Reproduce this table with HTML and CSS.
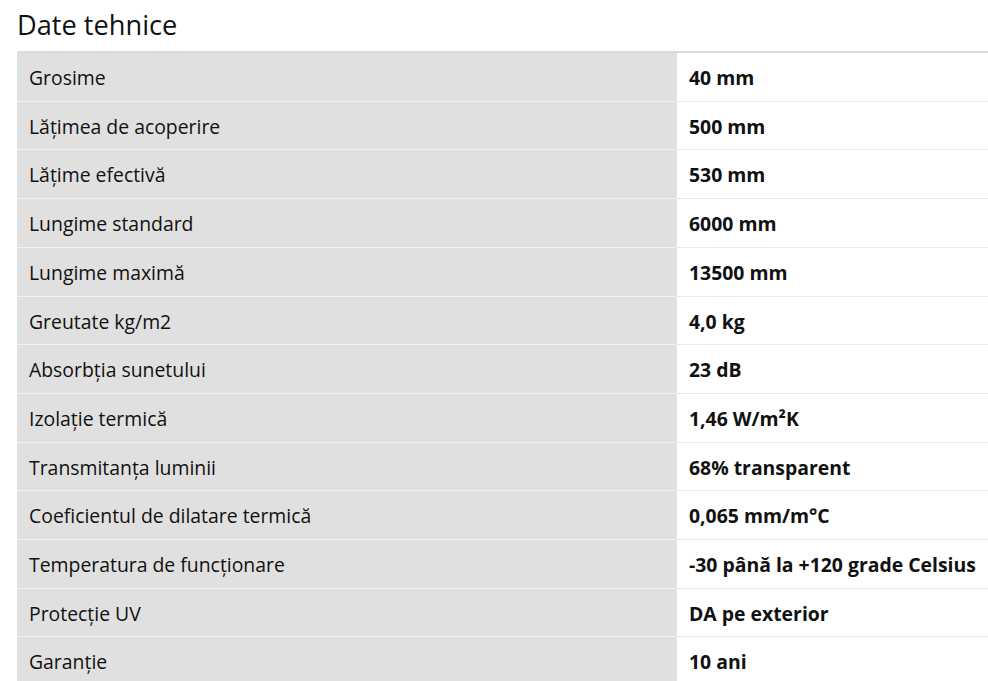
FILE: index.html
```html
<!DOCTYPE html>
<html lang="ro">
<head>
<meta charset="utf-8">
<link rel="stylesheet" href="styles.css">
</head>
<body>
<div class="wrap">
  <h2 class="title">Date tehnice</h2>
  <table class="specs">
    <tbody>
      <tr><td class="k">Grosime</td><td class="v">40 mm</td></tr>
      <tr><td class="k">Lăţimea de acoperire</td><td class="v">500 mm</td></tr>
      <tr><td class="k">Lăţime efectivă</td><td class="v">530 mm</td></tr>
      <tr><td class="k">Lungime standard</td><td class="v">6000 mm</td></tr>
      <tr><td class="k">Lungime maximă</td><td class="v">13500 mm</td></tr>
      <tr><td class="k">Greutate kg/m2</td><td class="v">4,0 kg</td></tr>
      <tr><td class="k">Absorbţia sunetului</td><td class="v">23 dB</td></tr>
      <tr><td class="k">Izolaţie termică</td><td class="v">1,46 W/m²K</td></tr>
      <tr><td class="k">Transmitanţa luminii</td><td class="v">68% transparent</td></tr>
      <tr><td class="k">Coeficientul de dilatare termică</td><td class="v">0,065 mm/m°C</td></tr>
      <tr><td class="k">Temperatura de funcţionare</td><td class="v">-30 până la +120 grade Celsius</td></tr>
      <tr><td class="k">Protecţie UV</td><td class="v">DA pe exterior</td></tr>
      <tr><td class="k">Garanţie</td><td class="v">10 ani</td></tr>
    </tbody>
  </table>
</div>
</body>
</html>
```

FILE: styles.css
```css
html, body {
  margin: 0;
  padding: 0;
  background: #fff;
  font-family: "Open Sans", "Noto Sans", sans-serif;
  color: #111;
}
.wrap {
  padding: 7px 0 0 17px;
}
.title {
  margin: 0 0 8px 0;
  font-size: 27.2px;
  font-weight: 400;
  line-height: 36px;
  color: #111;
}
.specs {
  width: 971px;
  border-collapse: collapse;
  border-top: 2px solid #dcdcdc;
}
.specs td {
  font-size: 19.4px;
  line-height: 25.7px;
  padding: 12px 12px 10px;
  border-bottom: 1px solid #ececec;
  text-align: left;
  vertical-align: middle;
  white-space: nowrap;
}
.specs td.k {
  width: 636px;
  background: #e0e0e0;
  border-bottom-color: #f2f2f2;
  font-weight: 400;
}
.specs td.v {
  font-weight: 700;
}
```
